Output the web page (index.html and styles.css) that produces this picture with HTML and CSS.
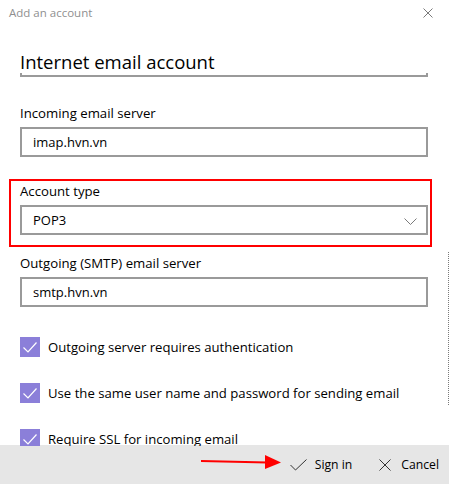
FILE: index.html
```html
<!DOCTYPE html>
<html lang="en">
<head>
<meta charset="utf-8">
<title>Add an account</title>
<link rel="stylesheet" href="styles.css">
</head>
<body>
<div class="dialog">
  <div class="titlebar">
    <span class="title">Add an account</span>
    <svg class="close" width="10" height="10" viewBox="0 0 10 10"><path d="M0.5 0.5 L9.5 9.5 M9.5 0.5 L0.5 9.5" stroke="#7a7a7a" stroke-width="1" fill="none"/></svg>
  </div>
  <div class="content">
    <div class="heading">Internet email account</div>
    <div class="heading-line"></div>

    <div class="field first">
      <div class="label">Incoming email server</div>
      <div class="input">imap.hvn.vn</div>
    </div>

    <div class="highlight">
      <div class="field">
        <div class="label">Account type</div>
        <div class="input select">
          <span>POP3</span>
          <svg class="chevron" width="13" height="7" viewBox="0 0 13 7"><path d="M0.5 0.5 L6.5 6.5 L12.5 0.5" stroke="#7a7a7a" stroke-width="1" fill="none"/></svg>
        </div>
      </div>
    </div>

    <div class="field smtp">
      <div class="label">Outgoing (SMTP) email server</div>
      <div class="input">smtp.hvn.vn</div>
    </div>

    <div class="checks">
      <div class="check-row">
        <span class="box"><svg width="20" height="20" viewBox="0 0 20 20"><path d="M3.5 10.5 L8 15 L16.5 5.5" stroke="#fff" stroke-width="1.2" fill="none"/></svg></span>
        <span class="check-text">Outgoing server requires authentication</span>
      </div>
      <div class="check-row">
        <span class="box"><svg width="20" height="20" viewBox="0 0 20 20"><path d="M3.5 10.5 L8 15 L16.5 5.5" stroke="#fff" stroke-width="1.2" fill="none"/></svg></span>
        <span class="check-text">Use the same user name and password for sending email</span>
      </div>
      <div class="check-row">
        <span class="box"><svg width="20" height="20" viewBox="0 0 20 20"><path d="M3.5 10.5 L8 15 L16.5 5.5" stroke="#fff" stroke-width="1.2" fill="none"/></svg></span>
        <span class="check-text">Require SSL for incoming email</span>
      </div>
    </div>
    <div class="scrollbar"></div>
  </div>
  <div class="footer">
    <svg class="arrow" width="80" height="16" viewBox="0 0 80 16"><path d="M0 7 L66 8.5" stroke="#f00" stroke-width="2" fill="none"/><path d="M64 1 L80 8.5 L64 15 Z" fill="#f00"/></svg>
    <div class="action signin">
      <svg width="17" height="12" viewBox="0 0 17 12"><path d="M0.5 6 L5.5 11 L16.5 0.5" stroke="#333" stroke-width="1" fill="none"/></svg>
      <span>Sign in</span>
    </div>
    <div class="action cancel">
      <svg width="12" height="12" viewBox="0 0 12 12"><path d="M0.5 0.5 L11.5 11.5 M11.5 0.5 L0.5 11.5" stroke="#333" stroke-width="1" fill="none"/></svg>
      <span>Cancel</span>
    </div>
  </div>
</div>
</body>
</html>
```

FILE: styles.css
```css
* { box-sizing: border-box; }
html, body {
  margin: 0;
  padding: 0;
  background: #fff;
}
body {
  font-family: "Open Sans", "Noto Sans", sans-serif;
  color: #000;
}
.dialog {
  width: 449px;
  height: 484px;
  display: flex;
  flex-direction: column;
  overflow: hidden;
}
.titlebar {
  height: 26px;
  flex: none;
  display: flex;
  align-items: center;
  justify-content: space-between;
  padding: 0 16px 0 9px;
}
.title {
  font-size: 11.5px;
  color: #8f8f8f;
  line-height: 26px;
}
.close { display: block; }
.content {
  flex: 1;
  position: relative;
  overflow: hidden;
  padding: 0 21px 0 20px;
}
.heading {
  font-size: 18.5px;
  line-height: 24px;
  margin-top: 24px;
}
.heading-line {
  height: 4px;
  margin-top: -1px;
  border: 2px solid #9a9a9a;
  border-top: none;
}
.field.first { margin-top: 26px; }
.label {
  font-size: 13.2px;
  line-height: 20px;
}
.input {
  margin-top: 4px;
  height: 30px;
  border: 2px solid #9a9a9a;
  font-size: 13px;
  line-height: 26px;
  padding-left: 11px;
}
.select {
  display: flex;
  align-items: center;
  justify-content: space-between;
  padding-right: 9px;
}
.chevron { display: block; margin-top: 2px; }
.highlight {
  margin: 22px -4px 0 -11px;
  border: 2px solid #f00;
  padding: 0 2px 10px 9px;
}
.field.smtp { margin-top: 6px; }
.checks {
  margin-top: 30px;
  display: flex;
  flex-direction: column;
  gap: 26px;
}
.check-row {
  display: flex;
  align-items: center;
  height: 20px;
}
.box {
  width: 20px;
  height: 20px;
  background: #8b7fd9;
  flex: none;
}
.box svg { display: block; }
.check-text {
  margin-left: 8px;
  font-size: 13.15px;
  line-height: 20px;
  white-space: nowrap;
}
.scrollbar {
  position: absolute;
  right: 0;
  top: 226px;
  height: 153px;
  width: 1px;
  border-left: 1px dotted #7a7a7a;
}
.footer {
  height: 39px;
  flex: none;
  background: #e6e6e6;
  display: flex;
  align-items: center;
  justify-content: flex-end;
  padding-right: 10px;
  margin-top: -1px;
}
.arrow { display: block; margin-right: 9px; margin-top: -6px; }
.action {
  display: flex;
  align-items: center;
  font-size: 12.2px;
  color: #000;
}
.action svg { display: block; }
.signin svg { margin-right: 8px; }
.signin { margin-right: 27px; }
.cancel svg { margin-right: 10px; }
```
